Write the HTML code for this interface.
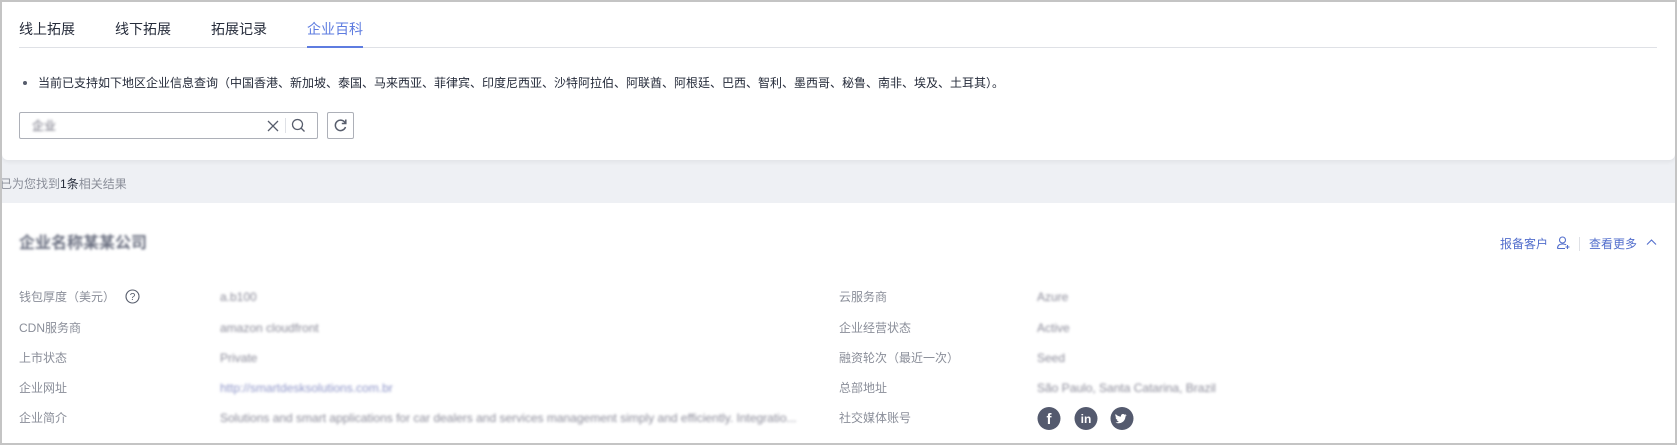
<!DOCTYPE html>
<html><head><meta charset="utf-8"><style>
*{margin:0;padding:0;box-sizing:border-box}
body{width:1677px;height:445px;overflow:hidden;background:#fff;font-family:"Liberation Sans","Noto Sans CJK SC",sans-serif;position:relative}
.frame{position:absolute;left:0;top:0;width:1677px;height:445px;border:2px solid #c4c4c4;z-index:10;pointer-events:none}
.band{position:absolute;left:0;top:150px;width:1677px;height:53px;background:#eef0f4}
.card{position:absolute;left:2px;top:2px;width:1673px;height:158px;background:#fff;border-radius:0 0 6px 6px;box-shadow:0 2px 4px rgba(0,0,0,.06)}
.a{position:absolute;white-space:nowrap;line-height:16px}
.tab{font-size:14px;color:#252b3a;top:21px}
.blur{filter:blur(1.2px);color:#8a8a98}
.lbl{font-size:12px;color:#8a8e99}
.val{font-size:12px}
</style></head><body>
<div class="band"></div>
<div class="card"></div>
<div class="a tab" style="left:19px">线上拓展</div>
<div class="a tab" style="left:115px">线下拓展</div>
<div class="a tab" style="left:211px">拓展记录</div>
<div class="a tab" style="left:307px;color:#5e7ce0">企业百科</div>
<div class="a" style="left:19px;top:47px;width:1638px;height:1px;background:#dfe1e6"></div>
<div class="a" style="left:307px;top:46px;width:56px;height:2px;background:#5e7ce0"></div>
<div class="a" style="left:23px;top:81px;width:4px;height:4px;border-radius:50%;background:#575d6c"></div>
<div class="a" style="left:38px;top:75px;font-size:12px;color:#252b3a">当前已支持如下地区企业信息查询（中国香港、新加坡、泰国、马来西亚、菲律宾、印度尼西亚、沙特阿拉伯、阿联酋、阿根廷、巴西、智利、墨西哥、秘鲁、南非、埃及、土耳其）。</div>
<div class="a" style="left:19px;top:112px;width:299px;height:27px;border:1px solid #adb0b8;border-radius:2px"></div>
<div class="a blur" style="left:32px;top:118px;font-size:12px;color:#6b6b7a">企业</div>
<svg class="a" style="left:266px;top:119px" width="14" height="14" viewBox="0 0 14 14"><path d="M2 2L12 12M12 2L2 12" stroke="#575d6c" stroke-width="1.3"/></svg>
<div class="a" style="left:285px;top:118px;width:1px;height:15px;background:#dfe1e6"></div>
<svg class="a" style="left:291px;top:118px" width="15" height="15" viewBox="0 0 15 15"><circle cx="6.5" cy="6.5" r="5" fill="none" stroke="#575d6c" stroke-width="1.3"/><path d="M10 10L13.5 13.5" stroke="#575d6c" stroke-width="1.3"/></svg>
<div class="a" style="left:327px;top:112px;width:27px;height:27px;border:1px solid #adb0b8;border-radius:2px"></div>
<svg class="a" style="left:332px;top:117px" width="17" height="17" viewBox="0 0 17 17"><path d="M13.2 6A5.2 5.2 0 1 0 13.5 10" fill="none" stroke="#575d6c" stroke-width="1.5"/><path d="M13.8 2.5V6.5H9.8" fill="none" stroke="#575d6c" stroke-width="1.5"/></svg>
<div class="a" style="left:0px;top:176px;font-size:12px;color:#8a8e99">已为您找到<span style="color:#252b3a">1条</span>相关结果</div>
<div class="a blur" style="left:19px;top:235px;font-size:16px;line-height:18px;font-weight:bold;color:#6a6f80">企业名称某某公司</div>
<div class="a" style="left:1500px;top:236px;font-size:12px;color:#526ecc">报备客户</div>
<svg class="a" style="left:1556px;top:235px" width="15" height="15" viewBox="0 0 15 15"><circle cx="6.5" cy="5" r="3" fill="none" stroke="#526ecc" stroke-width="1.1"/><path d="M1.5 13.5C1.5 10.5 3.5 9 6.5 9S10 10 10 10M1.5 13.5H9M11.5 10V14M9.5 12H13.5" fill="none" stroke="#526ecc" stroke-width="1.1"/></svg>
<div class="a" style="left:1579px;top:237px;width:1px;height:14px;background:#dfe1e6"></div>
<div class="a" style="left:1589px;top:236px;font-size:12px;color:#526ecc">查看更多</div>
<svg class="a" style="left:1646px;top:238px" width="11" height="9" viewBox="0 0 11 9"><path d="M1 6.5L5.5 2L10 6.5" fill="none" stroke="#526ecc" stroke-width="1.1"/></svg>

<div class="a lbl" style="left:19px;top:289px">钱包厚度（美元）</div>
<svg class="a" style="left:125px;top:289px" width="15" height="15" viewBox="0 0 15 15"><circle cx="7.5" cy="7.5" r="6.5" fill="none" stroke="#575d6c" stroke-width="1.1"/><text x="7.5" y="11" font-size="10" text-anchor="middle" fill="#575d6c" font-family="Liberation Sans">?</text></svg>
<div class="a val blur" style="left:220px;top:289px">a.b100</div>
<div class="a lbl" style="left:19px;top:320px">CDN服务商</div>
<div class="a val blur" style="left:220px;top:320px">amazon cloudfront</div>
<div class="a lbl" style="left:19px;top:350px">上市状态</div>
<div class="a val blur" style="left:220px;top:350px">Private</div>
<div class="a lbl" style="left:19px;top:380px">企业网址</div>
<div class="a val blur" style="left:220px;top:380px;color:#8e95c8">http://smartdesksolutions.com.br</div>
<div class="a lbl" style="left:19px;top:410px">企业简介</div>
<div class="a val blur" style="left:220px;top:410px;width:600px;overflow:hidden">Solutions and smart applications for car dealers and services management simply and efficiently. Integratio...</div>

<div class="a lbl" style="left:839px;top:289px">云服务商</div>
<div class="a val blur" style="left:1037px;top:289px">Azure</div>
<div class="a lbl" style="left:839px;top:320px">企业经营状态</div>
<div class="a val blur" style="left:1037px;top:320px">Active</div>
<div class="a lbl" style="left:839px;top:350px">融资轮次（最近一次）</div>
<div class="a val blur" style="left:1037px;top:350px">Seed</div>
<div class="a lbl" style="left:839px;top:380px">总部地址</div>
<div class="a val blur" style="left:1037px;top:380px">São Paulo, Santa Catarina, Brazil</div>
<div class="a lbl" style="left:839px;top:410px">社交媒体账号</div>
<svg class="a" style="left:1037px;top:406px" width="100" height="26" viewBox="0 0 100 26">
<circle cx="12" cy="12.5" r="11.5" fill="#545a6e"/><text x="12" y="18" font-size="15" font-weight="bold" text-anchor="middle" fill="#fff" font-family="Liberation Sans">f</text>
<circle cx="49" cy="12.5" r="11.5" fill="#545a6e"/><text x="49" y="17" font-size="12" font-weight="bold" text-anchor="middle" fill="#fff" font-family="Liberation Sans">in</text>
<circle cx="85" cy="12.5" r="11.5" fill="#545a6e"/><path d="M78.5 16.5c4 2 9.5 0 10-6l1.3-1.4-1.5.3.9-1.2-1.6.5c-1.5-1.5-4-.5-3.6 1.9-2.3 0-4-1-5.3-2.6-.8 1.5 0 3 1 3.6l-1.1-.2c0 1.2.9 2 2 2.3l-1 .1c.4 1 1.3 1.600 2.3 1.6-1 .8-2.2 1.2-3.4 1.1z" fill="#fff"/>
</svg>
<div class="frame"></div>
</body></html>
